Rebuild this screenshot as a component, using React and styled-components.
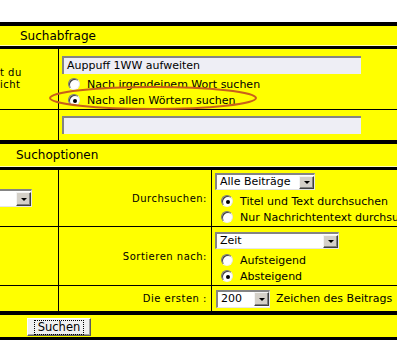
import React from "react";
import styled, { createGlobalStyle } from "styled-components";

const GlobalStyle = createGlobalStyle`
  html, body { margin: 0; padding: 0; background: #fff; overflow: hidden; }
  body { font-family: "DejaVu Sans", Verdana, sans-serif; color: #000; }
`;

const Page = styled.div`
  position: relative;
  width: 440px;
  padding-top: 22px;
`;

const HeadBar = styled.div`
  background: #ffff00;
  border-top: 4px solid #000;
  border-bottom: 3px solid #000;
  box-shadow: inset 0 -1px 0 #ffffb4;
  height: ${(p) => p.$h}px;
  line-height: ${(p) => p.$h}px;
  padding-left: ${(p) => p.$pad}px;
  font-size: 12px;
`;

const Row = styled.div`
  display: flex;
  background: #ffff00;
  height: ${(p) => p.$h}px;
  border-bottom: ${(p) => (p.$last ? "none" : "1px solid #000")};
`;

const EdgeCell = styled.div`
  width: 58px;
  flex: none;
  border-right: 1px solid #000;
  display: flex;
  flex-direction: column;
  justify-content: center;
  align-items: flex-start;
  font-size: 10px;
  letter-spacing: 0.5px;
  line-height: 12px;
  overflow: hidden;
`;

const LabelCell = styled.div`
  width: 148px;
  flex: none;
  padding-right: 4px;
  border-right: 1px solid #000;
  display: flex;
  align-items: center;
  justify-content: flex-end;
  font-size: 10px;
  letter-spacing: 0.5px;
  white-space: nowrap;
`;

const ValueCell = styled.div`
  flex: 1;
  display: flex;
  flex-direction: column;
  justify-content: ${(p) => (p.$center ? "center" : "flex-start")};
  padding: ${(p) => p.$pt || 0}px 0 0 3px;
  font-size: 11px;
  white-space: nowrap;
`;

const TextBox = styled.div`
  width: 294px;
  height: 16px;
  box-sizing: content-box;
  background: #eeeef5;
  border-top: 2px solid #848484;
  border-left: 2px solid #848484;
  font-size: 11px;
  line-height: 16px;
  padding-left: 3px;
`;

const Gap = styled.div`
  height: ${(p) => p.$h}px;
  flex: none;
`;

const RadioLine = styled.label`
  display: flex;
  align-items: center;
  height: 16px;
  padding-left: 6px;
  gap: 7px;
  font-size: 11px;
`;

const Radio = styled.span`
  width: 12px;
  height: 12px;
  box-sizing: border-box;
  border-radius: 50%;
  flex: none;
  background: radial-gradient(circle at 60% 60%, #ffffff 55%, #e8e8e8 100%);
  border: 1px solid;
  border-color: #7a7a7a #e8e8e8 #f4f4f4 #7a7a7a;
  box-shadow: inset 1px 1px 0 #404040;
  display: flex;
  align-items: center;
  justify-content: center;
  &::after {
    content: "";
    width: 4px;
    height: 4px;
    border-radius: 50%;
    background: ${(p) => (p.$on ? "#000" : "transparent")};
    margin: 1px 0 0 1px;
  }
`;

const Select = styled.div`
  width: ${(p) => p.$w}px;
  height: ${(p) => p.$h || 17}px;
  box-sizing: border-box;
  display: flex;
  align-items: center;
  background: #fff;
  border-top: 2px solid #848484;
  border-left: ${(p) => (p.$cut ? "0" : "2px solid #848484")};
  border-right: 1px solid #e6e6e6;
  border-bottom: 1px solid #e6e6e6;
  font-size: 11px;
  margin-left: ${(p) => p.$ml || 0}px;
  flex: none;
`;

const SelectText = styled.span`
  flex: 1;
  padding-left: 3px;
  line-height: 14px;
`;

const DropBtn = styled.span`
  width: 15px;
  height: calc(100% - 1px);
  box-sizing: border-box;
  background: #d4d0c8;
  border: 1px solid;
  border-color: #f4f4f4 #404040 #404040 #f4f4f4;
  box-shadow: inset -1px -1px 0 #808080;
  display: flex;
  align-items: center;
  justify-content: center;
  &::after {
    content: "";
    border-left: 3px solid transparent;
    border-right: 3px solid transparent;
    border-top: 3px solid #000;
    margin-top: 1px;
  }
`;

const Inline = styled.div`
  display: flex;
  align-items: center;
  gap: 6px;
  font-size: 11px;
`;

const ButtonRow = styled.div`
  background: #ffff00;
  border-top: 4px solid #000;
  border-bottom: 3px solid #000;
  height: 22px;
  display: flex;
  align-items: center;
  padding-left: 27px;
`;

const Button = styled.button`
  width: 64px;
  height: 18px;
  margin-top: 2px;
  padding: 0;
  background: #f0f0f0;
  border: 1px solid;
  border-color: #ffffff #5a5a5a #5a5a5a #ffffff;
  box-shadow: inset -1px -1px 0 #a0a0a0;
  font-family: "DejaVu Sans", Verdana, sans-serif;
  font-size: 11.5px;
  color: #000;
  display: flex;
  align-items: center;
  justify-content: center;
  & > span {
    border: 1px dotted #000;
    padding: 0 3px;
    line-height: 13px;
  }
`;

const Mark = styled.svg`
  position: absolute;
  left: 49px;
  top: 86px;
  overflow: visible;
`;

export default function App() {
  return (
    <>
      <GlobalStyle />
      <Page>
        <HeadBar $pad={20} $h={20}>Suchabfrage</HeadBar>
        <Row $h={60}>
          <EdgeCell>
            <span>t du</span>
            <span>icht</span>
          </EdgeCell>
          <ValueCell $pt={7}>
            <TextBox>Auppuff 1WW aufweiten</TextBox>
            <Gap $h={2} />
            <RadioLine>
              <Radio />
              Nach irgendeinem Wort suchen
            </RadioLine>
            <RadioLine>
              <Radio $on />
              Nach allen Wörtern suchen
            </RadioLine>
          </ValueCell>
        </Row>
        <Row $h={30} $last>
          <EdgeCell />
          <ValueCell $center>
            <TextBox />
          </ValueCell>
        </Row>
        <HeadBar $pad={16} $h={23}>Suchoptionen</HeadBar>
        <Row $h={56}>
          <EdgeCell>
            <Select $w={32} $h={18} $cut>
              <SelectText />
              <DropBtn />
            </Select>
          </EdgeCell>
          <LabelCell>Durchsuchen:</LabelCell>
          <ValueCell $pt={3}>
            <Select $w={100}>
              <SelectText>Alle Beiträge</SelectText>
              <DropBtn />
            </Select>
            <Gap $h={3} />
            <RadioLine>
              <Radio $on />
              Titel und Text durchsuchen
            </RadioLine>
            <RadioLine>
              <Radio />
              Nur Nachrichtentext durchsuchen
            </RadioLine>
          </ValueCell>
        </Row>
        <Row $h={58}>
          <EdgeCell />
          <LabelCell>Sortieren nach:</LabelCell>
          <ValueCell $pt={5}>
            <Select $w={124}>
              <SelectText>Zeit</SelectText>
              <DropBtn />
            </Select>
            <Gap $h={3} />
            <RadioLine>
              <Radio />
              Aufsteigend
            </RadioLine>
            <RadioLine>
              <Radio $on />
              Absteigend
            </RadioLine>
          </ValueCell>
        </Row>
        <Row $h={25} $last>
          <EdgeCell />
          <LabelCell>Die ersten :</LabelCell>
          <ValueCell $center>
            <Inline>
              <Select $w={54} $h={18} $ml={1}>
                <SelectText>200</SelectText>
                <DropBtn />
              </Select>
              Zeichen des Beitrags
            </Inline>
          </ValueCell>
        </Row>
        <ButtonRow>
          <Button>
            <span>Suchen</span>
          </Button>
        </ButtonRow>
        <Mark width="210" height="26">
          <ellipse cx="104" cy="12" rx="103" ry="11" fill="none" stroke="#c9601a" strokeWidth="2" />
        </Mark>
      </Page>
    </>
  );
}
